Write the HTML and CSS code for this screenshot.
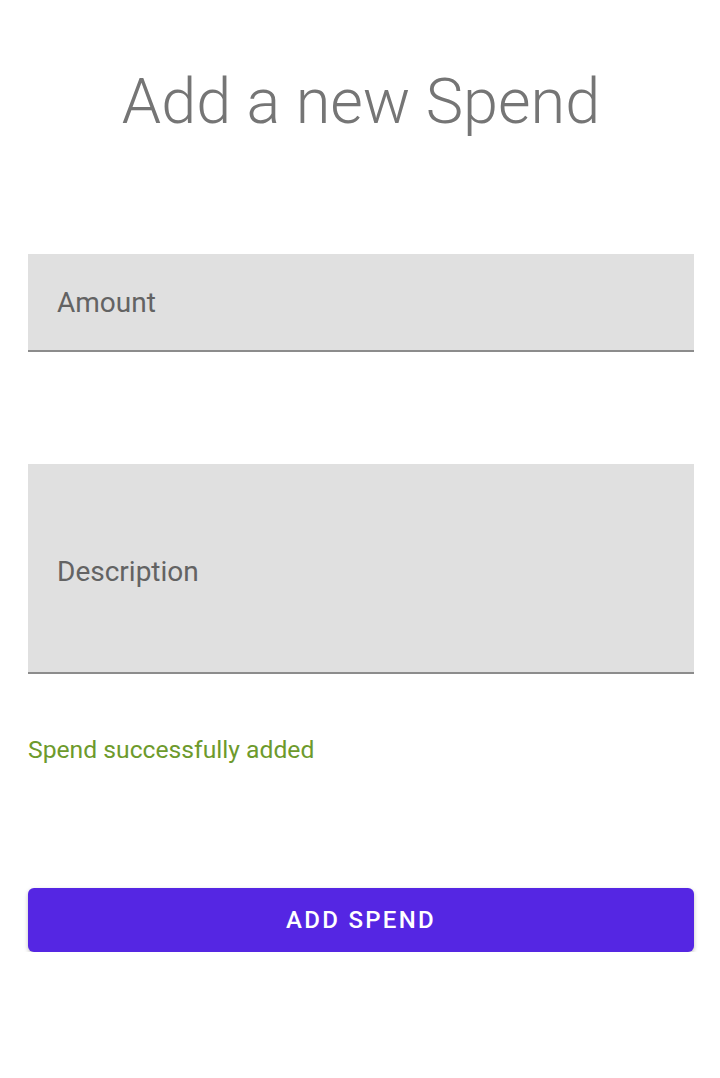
FILE: index.html
```html
<!DOCTYPE html>
<html>
<head>
<meta charset="utf-8">
<link rel="stylesheet" href="styles.css">
</head>
<body>
<main class="page">
  <h1 class="title">Add a new Spend</h1>
  <div class="field field-amount"><span class="label">Amount</span></div>
  <div class="field field-desc"><span class="label">Description</span></div>
  <p class="success">Spend successfully added</p>
  <button class="btn">ADD SPEND</button>
</main>
</body>
</html>
```
FILE: styles.css
```css
html, body {
  margin: 0;
  padding: 0;
  background: #ffffff;
}
body {
  font-family: Roboto, "Liberation Sans", sans-serif;
}
.page {
  display: flex;
  flex-direction: column;
  padding: 0 26px 0 28px;
}
.title {
  margin: 62px 0 0 0;
  font-weight: 300;
  font-size: 63px;
  line-height: 80px;
  color: #757575;
  text-align: center;
}
.field {
  background: #e0e0e0;
  border-bottom: 2px solid #8c8c8c;
  display: flex;
  align-items: center;
  padding-left: 29px;
  box-sizing: border-box;
}
.field-amount {
  margin-top: 112px;
  height: 98px;
}
.field-desc {
  margin-top: 112px;
  height: 210px;
  padding-top: 6px;
}
.label {
  font-size: 28px;
  color: #636363;
}
.success {
  margin: 58px 0 0 0;
  font-size: 24.7px;
  line-height: 36px;
  color: #6d9a2c;
}
.btn {
  margin-top: 120px;
  height: 64px;
  border: none;
  border-radius: 6px;
  background: #5526e3;
  color: #ffffff;
  font-family: Roboto, "Liberation Sans", sans-serif;
  font-weight: 500;
  font-size: 24px;
  letter-spacing: 2.3px;
  box-shadow: 0 2px 4px rgba(0,0,0,0.25);
}
```
